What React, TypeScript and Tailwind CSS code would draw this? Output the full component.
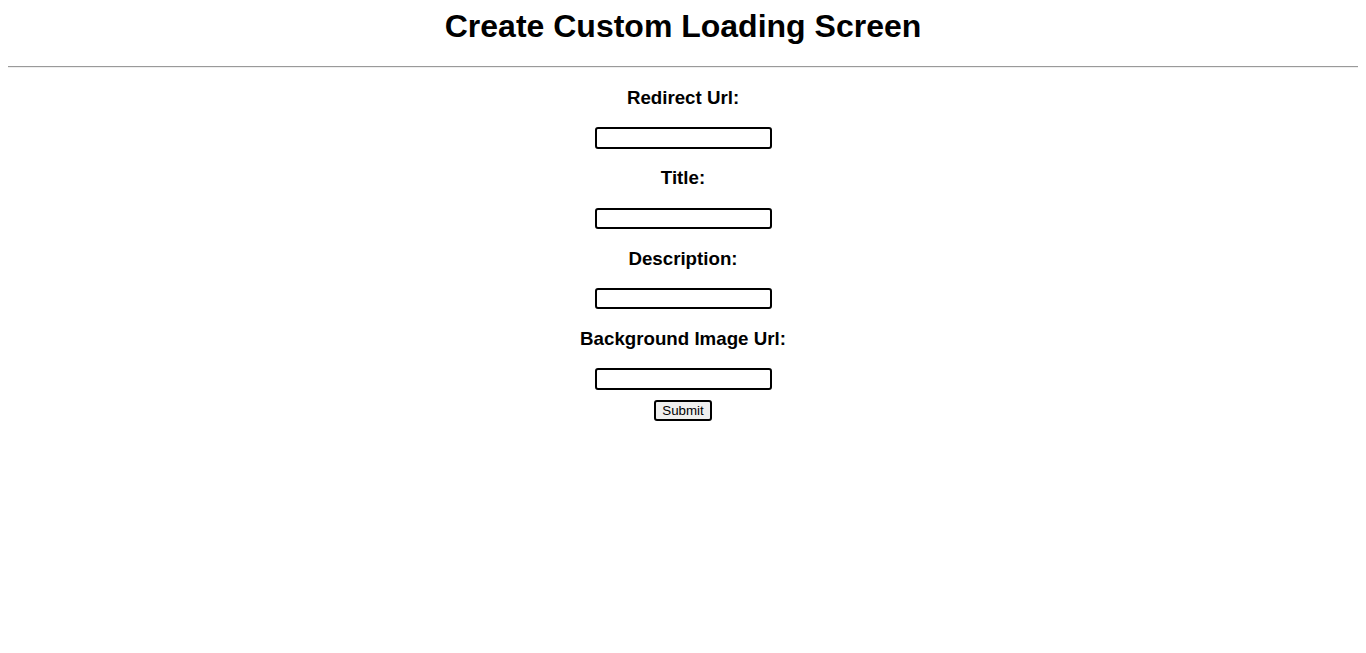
import React from 'react';

const fields = ['Redirect Url:', 'Title:', 'Description:', 'Background Image Url:'];

export default function App() {
  return (
    <div className="min-h-[653px] bg-white p-2 text-black font-['Liberation_Sans',Arial,sans-serif]">
      <h1 className="text-center text-[32px] font-bold leading-[37px] mb-[21.44px]">Create Custom Loading Screen</h1>
      <hr className="border-0 border-t border-t-[#9a9a9a] border-b border-b-[#eeeeee]" />
      <form className="flex flex-col items-center" onSubmit={e => e.preventDefault()}>
        {fields.map((label, i) => (
          <div key={i} className="flex flex-col items-center">
            <label className="block text-[18.72px] font-bold leading-[21.5px] mt-[18.72px] mb-[18.72px]">{label}</label>
            <input
              type="text"
              className="block w-[177px] h-[21.33px] border-2 border-black rounded-[3px] bg-white px-[2px] text-[13.33px] outline-none"
            />
          </div>
        ))}
        <button
          type="submit"
          className="mt-[10.5px] w-[58px] h-[21px] border-2 border-black rounded-[3px] bg-[#efefef] text-[13.33px] leading-[15px] font-['Liberation_Sans',Arial,sans-serif]"
        >
          Submit
        </button>
      </form>
    </div>
  );
}
